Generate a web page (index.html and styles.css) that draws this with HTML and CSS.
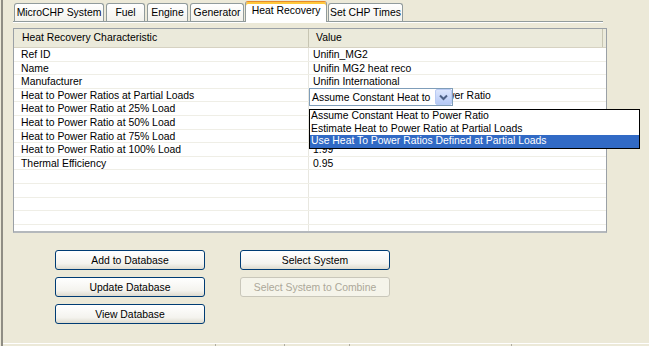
FILE: index.html
```html
<!DOCTYPE html>
<html lang="en">
<head>
    <meta charset="UTF-8">
    <title>Heat Recovery</title>
    <link rel="stylesheet" href="styles.css">
</head>
<body>

    <div class="window">
        <div class="tabs">
            <div class="tab tab-system">MicroCHP System</div>
            <div class="tab tab-fuel">Fuel</div>
            <div class="tab tab-engine">Engine</div>
            <div class="tab tab-generator">Generator</div>
            <div class="tab tab-heat active">Heat Recovery</div>
            <div class="tab tab-times">Set CHP Times</div>
        </div>

        <div class="grid">
            <div class="grid-head">
                <div class="cell key">Heat Recovery Characteristic</div>
                <div class="cell value">Value</div>
            </div>
            <div class="grid-body">
                <div class="row"><div class="cell key">Ref ID</div><div class="cell value">Unifin_MG2</div></div>
                <div class="row"><div class="cell key">Name</div><div class="cell value">Unifin MG2 heat reco</div></div>
                <div class="row"><div class="cell key">Manufacturer</div><div class="cell value">Unifin International</div></div>
                <div class="row"><div class="cell key">Heat to Power Ratios at Partial Loads</div><div class="cell value">Assume Constant Heat to Power Ratio</div></div>
                <div class="row"><div class="cell key">Heat to Power Ratio at 25% Load</div><div class="cell value"></div></div>
                <div class="row"><div class="cell key">Heat to Power Ratio at 50% Load</div><div class="cell value"></div></div>
                <div class="row"><div class="cell key">Heat to Power Ratio at 75% Load</div><div class="cell value"></div></div>
                <div class="row"><div class="cell key">Heat to Power Ratio at 100% Load</div><div class="cell value">1.99</div></div>
                <div class="row"><div class="cell key">Thermal Efficiency</div><div class="cell value">0.95</div></div>
                <div class="row"><div class="cell key"></div><div class="cell value"></div></div>
                <div class="row"><div class="cell key"></div><div class="cell value"></div></div>
                <div class="row"><div class="cell key"></div><div class="cell value"></div></div>
                <div class="row"><div class="cell key"></div><div class="cell value"></div></div>
                <div class="row"><div class="cell key"></div><div class="cell value"></div></div>
            </div>

            <!-- open combo editor over the "partial loads" row -->
            <div class="combo">
                <span class="combo-text">Assume Constant Heat to</span>
                <span class="combo-arrow">
                    <svg width="9" height="7" viewBox="0 0 9 7">
                        <path d="M1 1.5 L4.5 5 L8 1.5" fill="none" stroke="#4d6185" stroke-width="2"/>
                    </svg>
                </span>
            </div>
            <div class="combo-list">
                <div class="option">Assume Constant Heat to Power Ratio</div>
                <div class="option">Estimate Heat to Power Ratio at Partial Loads</div>
                <div class="option selected">Use Heat To Power Ratios Defined at Partial Loads</div>
            </div>
        </div>

        <div class="actions">
            <div class="column">
                <button class="btn">Add to Database</button>
                <button class="btn">Update Database</button>
                <button class="btn">View Database</button>
            </div>
            <div class="column">
                <button class="btn">Select System</button>
                <button class="btn" disabled>Select System to Combine</button>
            </div>
        </div>

        <div class="status">
            <span class="seg seg-1"></span>
            <span class="seg seg-2"></span>
            <span class="seg seg-3"></span>
            <span class="seg seg-4"></span>
        </div>
    </div>

</body>
</html>
```

FILE: styles.css
```css
* {
    margin: 0;
    padding: 0;
    box-sizing: border-box;
}

body {
    font-family: 'Liberation Sans', Arial, sans-serif;
    font-size: 10.4px;
    color: #000;
    background: #ECE9D8;
    overflow: hidden;
}

.window {
    height: 346px;
    margin-left: 1px;
    border-left: 2px solid #8f8d84;
    padding-left: 10px;
    display: flex;
    flex-direction: column;
}

/* tab strip */
.tabs {
    display: flex;
    align-items: flex-end;
    gap: 2px;
    width: 590px;
    height: 22px;
    padding-left: 1px;
    border-bottom: 1px solid #919B9C;
    box-shadow: 0 1px 0 #fff;
}

.tab {
    height: 18px;
    line-height: 17px;
    text-align: center;
    white-space: nowrap;
    border: 1px solid #919B9C;
    border-bottom: none;
    border-radius: 3px 3px 0 0;
    background: linear-gradient(#ffffff, #f3f2ec);
}

.tab-system { width: 90px; }
.tab-fuel { width: 39px; }
.tab-engine { width: 41px; }
.tab-generator { width: 54px; }
.tab-heat { width: 82px; }
.tab-times { width: 75px; }

.tab.active {
    height: 21px;
    line-height: 17px;
    margin: 0 -1px -1px -1px;
    background: #fff;
    border-top: 1px solid #E68B2C;
    box-shadow: inset 0 2px 0 #FFC83C;
    position: relative;
}

/* property grid */
.grid {
    position: relative;
    width: 594px;
    margin-top: 6px;
    background: #fff;
    border: 1px solid #9aa0a6;
    border-bottom: 2px solid #b4b8bc;
}

.grid-head {
    display: flex;
    height: 19px;
    background: #EBEADB;
    border-bottom: 1px solid #D6D2C2;
}

.grid-head .cell {
    line-height: 18px;
    padding-left: 8px;
}

.grid-head .key {
    border-right: 1px solid #C7C5B2;
}

.grid-head .value {
    padding-left: 7px;
    flex: 1;
    border-right: 1px solid #C7C5B2;
    margin-right: 3px;
}

.cell {
    white-space: nowrap;
    overflow: hidden;
}

.key {
    width: 295px;
}

.grid-body {
    height: 183px;
    overflow: hidden;
}

.row {
    display: flex;
    height: 13.6px;
    border-bottom: 1px solid #EFEEE6;
}

.row .cell {
    line-height: 13px;
}

.row .key {
    padding-left: 7px;
    border-right: 1px solid #E8E7E0;
}

.row .value {
    flex: 1;
    padding-left: 4px;
}

/* combo editor */
.combo {
    position: absolute;
    left: 295px;
    top: 59px;
    width: 144px;
    height: 18px;
    background: #fff;
    border: 1px solid #7F9DB9;
    display: flex;
    align-items: center;
}

.combo-text {
    padding-left: 2px;
    flex: 1;
    white-space: nowrap;
    overflow: hidden;
}

.combo-arrow {
    width: 17px;
    height: 16px;
    display: flex;
    align-items: center;
    justify-content: center;
    border: 1px solid #B9CBF3;
    border-radius: 2px;
    background: linear-gradient(#DCE6FD, #B5C9F6);
}

.combo-list {
    position: absolute;
    left: 295px;
    top: 80px;
    width: 331px;
    height: 40px;
    background: #fff;
    border: 1px solid #000;
    display: flex;
    flex-direction: column;
}

.option {
    flex: 1;
    padding-left: 1px;
    line-height: 12px;
    white-space: nowrap;
}

.option.selected {
    background: #316AC5;
    color: #fff;
}

/* buttons */
.actions {
    display: flex;
    gap: 35px;
    margin-top: 17px;
    padding-left: 42px;
}

.column {
    display: flex;
    flex-direction: column;
    gap: 7px;
}

.btn {
    width: 150px;
    height: 20px;
    font-family: inherit;
    font-size: 10.4px;
    color: #000;
    border: 1px solid #003C74;
    border-radius: 3px;
    background: linear-gradient(#ffffff, #f4f3ee 70%, #dedbcf);
}

.btn:disabled {
    color: #ACA899;
    border-color: #C9C7BA;
    background: #F5F4EA;
}

/* bottom strip */
.status {
    display: flex;
    margin-top: auto;
    margin-left: -10px;
    height: 3px;
    border-top: 1px solid #fff;
}

.seg {
    border-right: 1px solid #b0ada0;
}

.seg-1 { width: 213px; }
.seg-2 { width: 69px; }
.seg-3 { width: 65px; }
.seg-4 { width: 162px; }
```
